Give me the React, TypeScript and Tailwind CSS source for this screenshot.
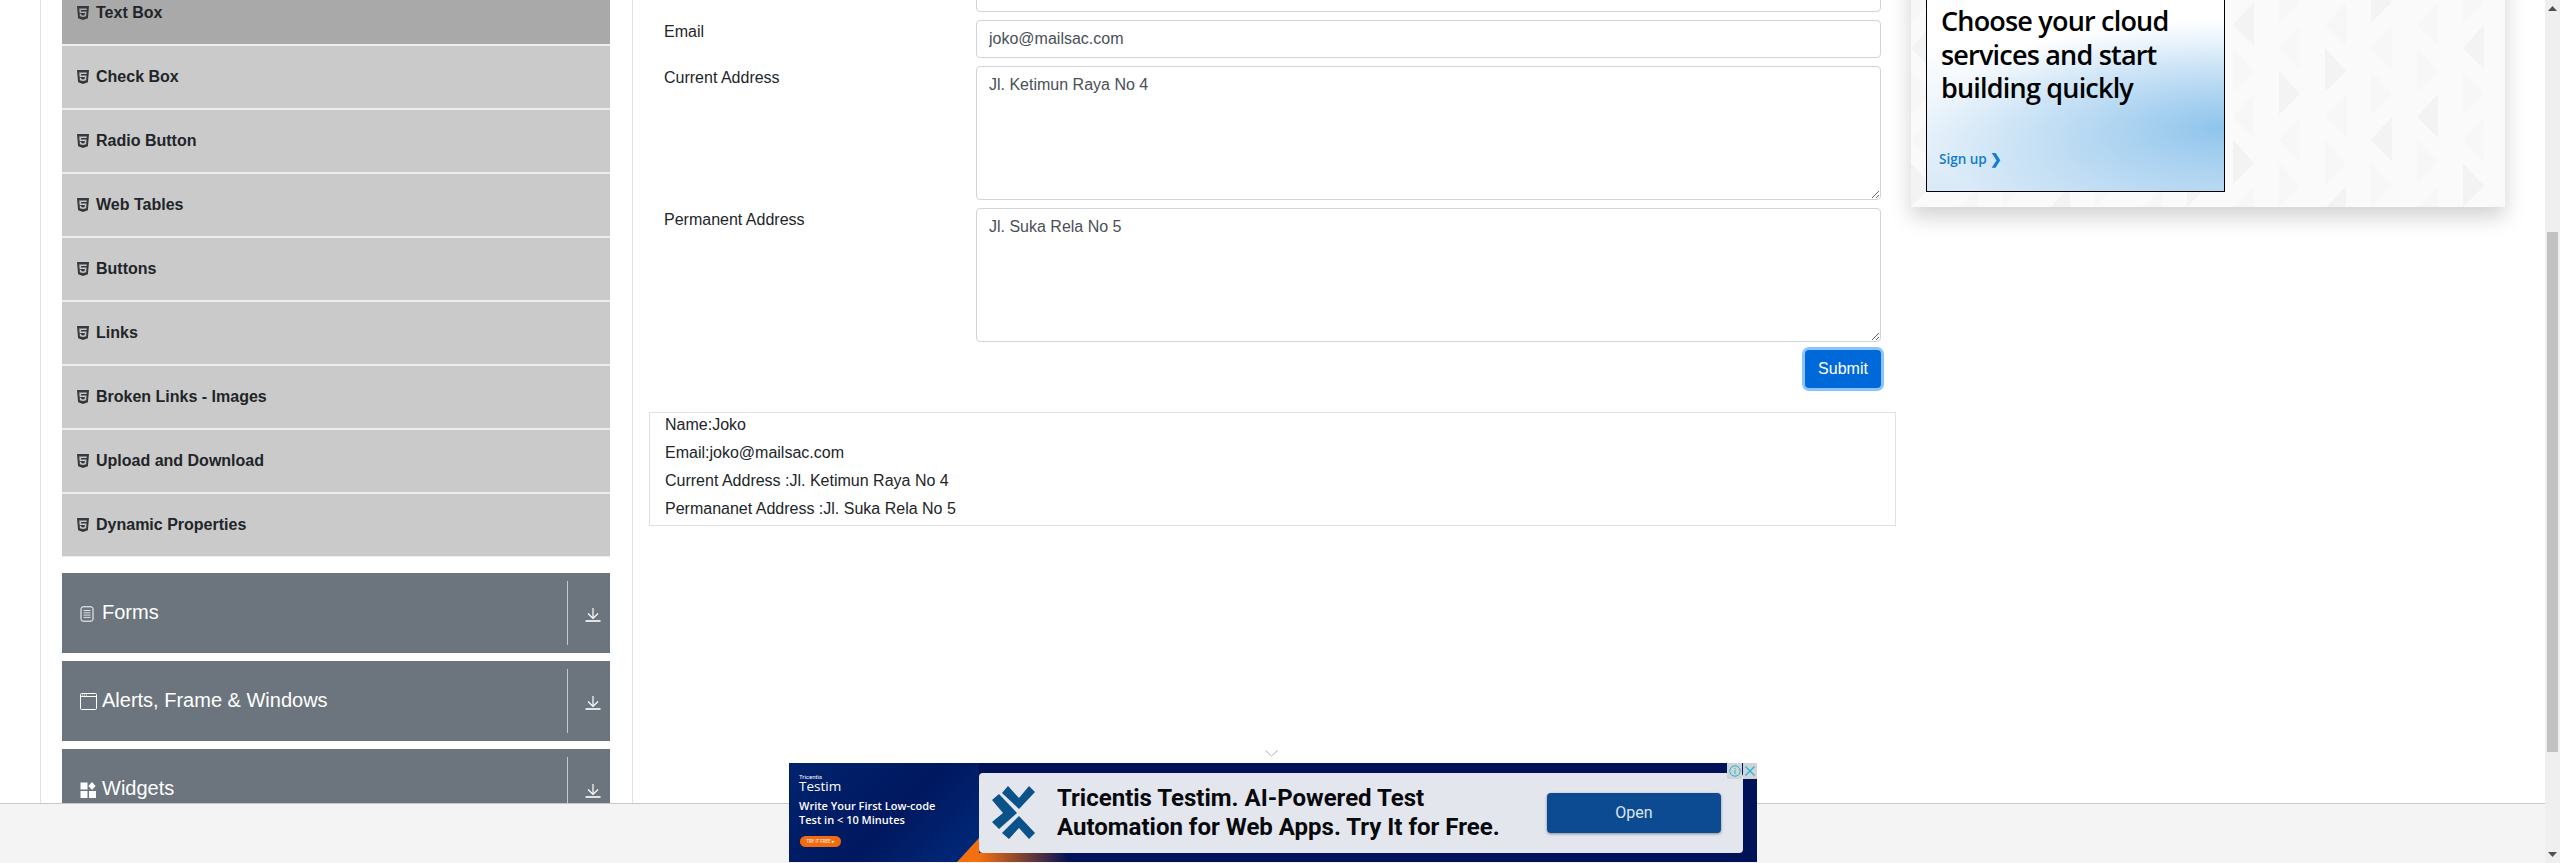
import React from "react";
import { FaHtml5 } from "react-icons/fa";

const menuItems = [
  "Text Box",
  "Check Box",
  "Radio Button",
  "Web Tables",
  "Buttons",
  "Links",
  "Broken Links - Images",
  "Upload and Download",
  "Dynamic Properties",
];

function DownloadIcon() {
  return (
    <svg width="16" height="14" viewBox="0 0 16 14" fill="none" stroke="#ffffff" strokeWidth="1.2">
      <path d="M8 0v10M3 5.5 8 10.5 13 5.5" />
      <path d="M0.5 13h15" strokeWidth="1.6" />
    </svg>
  );
}

function FormsIcon() {
  return (
    <svg width="14" height="16" viewBox="0 0 14 16" fill="none" stroke="#ffffff" strokeWidth="1">
      <rect x="1" y="0.8" width="12" height="14.4" rx="2" />
      <path d="M3.5 4.5h7M3.5 6.8h7M3.5 9.1h7M3.5 11.4h7" strokeOpacity="0.8" />
    </svg>
  );
}

function WindowIcon() {
  return (
    <svg width="17" height="17" viewBox="0 0 17 17" fill="none" stroke="#ffffff" strokeWidth="1">
      <rect x="0.5" y="0.5" width="16" height="16" rx="1" />
      <path d="M0.5 3.5h16" />
      <path d="M2 2h1M4 2h1M6 2h1" strokeWidth="1" />
    </svg>
  );
}

function WidgetsIcon() {
  return (
    <svg width="16" height="16" viewBox="0 0 16 16" fill="#ffffff">
      <rect x="0.5" y="0.5" width="7" height="7" />
      <rect x="0.5" y="9" width="7" height="7" />
      <rect x="9" y="9" width="7" height="7" />
      <path d="M12 0l3.6 4-3.6 4-3.6-4z" />
    </svg>
  );
}

function AccordionHeader({ icon, label }: { icon: React.ReactNode; label: string }) {
  return (
    <div className="h-[80px] flex bg-[#6c757d] text-white">
      <div className="flex-1 flex items-center pl-[18px] pb-[3px] text-[20px]">
        <span className="w-[22px] flex justify-start pt-[4px]">{icon}</span>
        <span>{label}</span>
      </div>
      <div className="w-[43px] my-[8px] border-l border-[#c6c9cc] flex items-center justify-center pl-[8px] pt-[4px]">
        <DownloadIcon />
      </div>
    </div>
  );
}

function Sidebar() {
  return (
    <aside className="w-[593px] shrink-0 border-x border-[#dfe2e5] pl-[21px] pr-[22px] -mt-[18px] self-start">
      <div className="flex flex-col gap-[2px] bg-[#eceef0] border-b border-[#eceef0]">
        {menuItems.map((item, i) => (
          <div
            key={item}
            className={`h-[62px] flex items-center pl-[13px] font-bold text-[16px] text-[#212529] ${
              i === 0 ? "bg-[#a9a9a9]" : "bg-[#cacaca]"
            }`}
          >
            <FaHtml5 className="text-[16px] text-[#343a40] mr-[5px]" />
            <span>{item}</span>
          </div>
        ))}
      </div>
      <div className="mt-[16px] flex flex-col gap-[8px]">
        <AccordionHeader icon={<FormsIcon />} label="Forms" />
        <AccordionHeader icon={<WindowIcon />} label="Alerts, Frame & Windows" />
        <AccordionHeader icon={<WidgetsIcon />} label="Widgets" />
      </div>
    </aside>
  );
}

function FormRow({ label, children }: { label: string; children: React.ReactNode }) {
  return (
    <div className="flex">
      <label className="w-[312px] shrink-0 leading-[23px] text-[#212529]">{label}</label>
      <div className="flex-1">{children}</div>
    </div>
  );
}

const fieldClass =
  "block w-full border border-[#ced4da] rounded-[4px] px-[12px] py-[6px] leading-[24px] text-[#495057] bg-white outline-none";

function MainForm() {
  return (
    <main className="w-[1278px] shrink-0 pl-[16px] pr-[15px] -mt-[26px]">
      <div className="flex flex-col gap-[8px] px-[15px]">
        <FormRow label="">
          <input readOnly defaultValue="" className={`${fieldClass} h-[38px]`} />
        </FormRow>
        <FormRow label="Email">
          <input readOnly defaultValue="joko@mailsac.com" className={`${fieldClass} h-[38px]`} />
        </FormRow>
        <FormRow label="Current Address">
          <textarea readOnly defaultValue="Jl. Ketimun Raya No 4" className={`${fieldClass} h-[134px]`} />
        </FormRow>
        <FormRow label="Permanent Address">
          <textarea readOnly defaultValue="Jl. Suka Rela No 5" className={`${fieldClass} h-[134px]`} />
        </FormRow>
        <div className="flex justify-end">
          <button className="h-[38px] w-[76px] rounded-[4px] bg-[#0069d9] text-white ring-[3px] ring-[#8dc3fb]">
            Submit
          </button>
        </div>
      </div>
      <div className="mt-[24px] border border-[#dfe1e5] pl-[15px] text-[#212529] leading-[24px]">
        <p className="mb-[4px]">Name:Joko</p>
        <p className="mb-[4px]">Email:joko@mailsac.com</p>
        <p className="mb-[4px]">Current Address :Jl. Ketimun Raya No 4</p>
        <p className="mb-[4px]">Permananet Address :Jl. Suka Rela No 5</p>
      </div>
    </main>
  );
}

// faint triangle texture behind the side ad
function TrianglePattern() {
  const tris: React.ReactNode[] = [];
  for (let col = 0; col < 14; col++) {
    for (let row = 0; row < 8; row++) {
      const x = col * 46;
      const y = row * 46 + (col % 2 ? 23 : 0) - 20;
      const dark = (col * 7 + row * 13) % 3 === 0;
      const flip = (col + row) % 2 === 0;
      tris.push(
        <polygon
          key={`${col}-${row}`}
          points={flip ? `${x},${y} ${x + 21},${y + 23} ${x},${y + 44}` : `${x + 21},${y} ${x},${y + 23} ${x + 21},${y + 44}`}
          fill={dark ? "#f3f3f3" : "#f7f7f7"}
        />
      );
    }
  }
  return (
    <svg className="absolute inset-0 w-full h-full" viewBox="0 0 594 300" preserveAspectRatio="none">
      {tris}
    </svg>
  );
}

function SideAd() {
  return (
    <div className="relative w-[594px] h-[300px] -mt-[93px] shrink-0 bg-[#fafafa] shadow-[0_10px_20px_rgba(0,0,0,0.18)] overflow-hidden self-start">
      <TrianglePattern />
      <div className="absolute left-[15px] bottom-[15px] w-[299px] h-[250px] border border-black bg-[radial-gradient(ellipse_300px_110px_at_100%_75%,#8fc4ec_0%,rgba(143,196,236,0.5)_50%,rgba(255,255,255,0)_100%),linear-gradient(180deg,#ffffff_40%,#d8e9f7_100%)] font-['Open_Sans',sans-serif]">
        <div className="absolute left-[14px] top-[61px] text-[27px] leading-[33.5px] font-semibold text-black tracking-[-0.8px]">
          <div>Choose your cloud</div>
          <div>services and start</div>
          <div>building quickly</div>
        </div>
        <div className="absolute left-[12px] top-[206px] text-[13.5px] font-semibold text-[#0f7bd4]">Sign up ❯</div>
      </div>
    </div>
  );
}

function TestimLogo() {
  return (
    <svg width="46" height="54" viewBox="0 0 46 54" fill="#0a5289">
      <path d="M10 7 16 0 27 12 37 0 43 6 27 23z" />
      <path d="M0 14 7 8 25 27 7 43 0 36 11 27z" />
      <path d="M10 47 27 30 43 47 37 53 27 42 17 53z" />
    </svg>
  );
}

function BottomAd() {
  return (
    <div className="absolute left-[789px] top-[763px] w-[968px] h-[99px] bg-[#001258] overflow-hidden font-['Roboto',sans-serif]">
      <div className="absolute left-0 top-0 w-[190px] h-full bg-[linear-gradient(135deg,#00236e_0%,#00185f_55%,#012a7c_100%)] text-white">
        <div className="absolute left-[10px] top-[10px] text-[6px] leading-[7px]">Tricentis</div>
        <div className="absolute left-[10px] top-[15px] text-[13.5px] leading-[16px] font-['Open_Sans',sans-serif]">Testim</div>
        <div className="absolute left-[10px] top-[36px] text-[11px] leading-[14px] font-semibold font-['Open_Sans',sans-serif] whitespace-nowrap">
          <div>Write Your First Low-code</div>
          <div>Test in &lt; 10 Minutes</div>
        </div>
        <div className="absolute left-[11px] top-[73px] w-[41px] h-[11px] rounded-full bg-[#f26b0f] text-[4.5px] leading-[11px] text-center whitespace-nowrap">
          TRY IT FREE ▸
        </div>
      </div>
      <div className="absolute left-[168px] bottom-0 w-0 h-0 border-l-[22px] border-l-transparent border-b-[24px] border-b-[#f2700f]" />
      <div className="absolute left-[190px] bottom-0 w-[90px] h-[9px] bg-[linear-gradient(90deg,#f2700f,#001258)]" />
      <div className="absolute left-[190px] top-[10px] right-[14px] h-[80px] rounded-[4px] bg-[#e4e6ee] flex items-center pl-[13px]">
        <TestimLogo />
        <div className="ml-[19px] w-[470px] text-[24px] leading-[29px] font-bold text-[#08090d] whitespace-nowrap">
          <div>Tricentis Testim. AI-Powered Test</div>
          <div>Automation for Web Apps. Try It for Free.</div>
        </div>
        <div className="ml-auto mr-[22px] w-[174px] h-[40px] rounded-[4px] bg-[#0c4b91] shadow-[0_1px_3px_rgba(0,0,0,0.4)] text-[#dde4f2] text-[16px] flex items-center justify-center">
          Open
        </div>
      </div>
      <div className="absolute right-0 top-0 flex h-[16px] gap-[1px]">
        <div className="w-[15px] bg-[#d2d3d6] flex items-center justify-center">
          <svg width="12" height="12" viewBox="0 0 12 12" fill="none" stroke="#1bb8d4" strokeWidth="1">
            <circle cx="6" cy="6" r="5.2" />
            <path d="M6 5v4M6 3v1.2" />
          </svg>
        </div>
        <div className="w-[14px] bg-[#d2d3d6] flex items-center justify-center">
          <svg width="10" height="10" viewBox="0 0 10 10" fill="none" stroke="#1bb8d4" strokeWidth="1.2">
            <path d="M0.5 0.5l9 9M9.5 0.5l-9 9" />
          </svg>
        </div>
      </div>
    </div>
  );
}

function Scrollbar() {
  return (
    <div className="absolute right-0 top-0 bottom-0 w-[15px] bg-[#efefef] flex flex-col items-center">
      <svg className="mt-[6px]" width="9" height="5" viewBox="0 0 9 5" fill="#505050">
        <path d="M4.5 0 9 5H0z" />
      </svg>
      <div className="mt-[221px] w-[11px] h-[520px] bg-[#c1c1c1]" />
      <svg className="mt-auto mb-[6px]" width="9" height="5" viewBox="0 0 9 5" fill="#505050">
        <path d="M0 0h9L4.5 5z" />
      </svg>
    </div>
  );
}

export default function App() {
  return (
    <div className="relative h-[863px] w-full overflow-hidden bg-white font-['Liberation_Sans',Arial,sans-serif] text-[16px]">
      <div className="flex pl-[40px]">
        <Sidebar />
        <MainForm />
        <SideAd />
      </div>

      {/* sticky footer strip with the ad on top of it */}
      <div className="absolute left-0 right-[15px] top-[803px] bottom-0 bg-[#f4f4f4] border-t border-[#c8c8c8]" />
      <svg className="absolute left-[1265px] top-[750px]" width="13" height="7" viewBox="0 0 13 7" fill="none" stroke="#9a9a9a" strokeWidth="0.8">
        <path d="M0.5 0.5 6.5 6 12.5 0.5" />
      </svg>
      <BottomAd />
      <Scrollbar />
    </div>
  );
}
